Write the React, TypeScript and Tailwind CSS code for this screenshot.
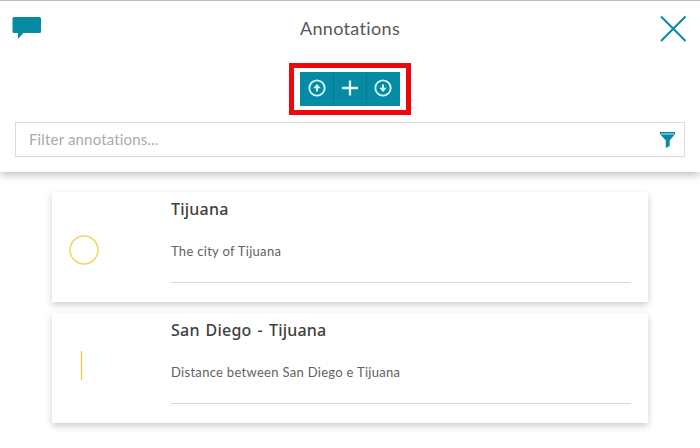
import React from "react";

const ink = "#078aa3";

function Arrow({ down = false }: { down?: boolean }) {
  return (
    <svg width="18" height="18" viewBox="0 0 18 18" fill="none" stroke="#d9fbff" className={down ? "mr-px mb-[2px] rotate-180" : "mb-[2px] ml-px"}>
      <circle cx="9" cy="9" r="7.700" strokeWidth="1.800" />
      <path d="M9 12.500V7" strokeWidth="2" />
      <path d="M5.300 9.300 9 5l3.700 4.300Z" fill="#d9fbff" stroke="none" />
    </svg>
  );
}

type CardProps = { title: string; text: string; children: React.ReactNode };

function Card({ title, text, children }: CardProps) {
  return (
    <article className="flex h-[110px] bg-white pr-[17px] shadow-[0_3px_7px_rgba(0,0,0,0.2)]">
      <div className="w-[119px] shrink-0 pl-[17px]">{children}</div>
      <div className="h-[91px] flex-1 border-b border-[#d8d8d8] whitespace-nowrap">
        <h2 className="pt-[7px] font-['Noto_Sans',sans-serif] text-[16px] leading-[20px] font-medium tracking-[0.22px] [word-spacing:1.6px] text-[#404040]">{title}</h2>
        <p className="mt-[24px] font-['Lato',sans-serif] text-[13px] leading-[16px] tracking-[0.3px] text-[#626262]">{text}</p>
      </div>
    </article>
  );
}

export default function App() {
  return (
    <main className="h-[448px] w-[700px] overflow-hidden bg-white font-['Lato',sans-serif]">
      <header className="h-[172px] border-t border-[#bdbdbd] bg-white shadow-[0_3px_8px_rgba(0,0,0,0.25)]">
        <div className="flex h-[62px] items-start justify-between pr-[13px] pl-[12px]">
          <svg className="mt-[15px]" width="30" height="24" viewBox="0 0 30 24" fill={ink}>
            <path d="M2 1h25.500q1.500 0 1.500 1.500V15.500q0 1.500-1.500 1.500H11.500L6 22.700V17H2Q.5 17 .5 15.500V2.500Q.5 1 2 1Z" />
          </svg>
          <h1 className="mt-[14px] -ml-px text-[18px] leading-[26px] tracking-[0.35px] text-[#575757]">Annotations</h1>
          <svg className="mt-[14px]" width="28" height="28" viewBox="0 0 28 28" fill="none" stroke={ink} strokeWidth="2">
            <path d="M2 1.500 26.500 26M26.500 1.500 2 26" />
          </svg>
        </div>
        <div className="mx-auto flex h-[52px] w-[122px] border-[5px] border-[#ee080b] pt-[4px] pl-[6px]">
          <div className="flex h-[34px] w-[100px] divide-x divide-[#067b91] bg-[#078aa3]">
            <button className="grid flex-1 place-items-center"><Arrow /></button>
            <button className="grid flex-1 place-items-center">
              <svg className="mb-[2px]" width="18" height="18" viewBox="0 0 18 18" stroke="#e5fdff" strokeWidth="2.300"><path d="M9 1.500v15M1 9h16" /></svg>
            </button>
            <button className="grid flex-1 place-items-center"><Arrow down /></button>
          </div>
        </div>
        <div className="mx-[15px] mt-[7px] flex h-[35px] items-center justify-between border border-[#dcdcdc] pr-[9px] pl-[13px]">
          <input className="w-[300px] text-[15px] tracking-[0.160px] outline-none placeholder:text-[#aaaaaa]" placeholder="Filter annotations..." />
          <svg width="15" height="18" viewBox="0 0 15 18" fill={ink}>
            <path d="M0 1h15v2L9.700 9.500V15L5.800 17V9.500L0 3Z" />
            <path d="M1 3h13" stroke="#bdeaf0" strokeWidth="1" />
          </svg>
        </div>
      </header>
      <section className="mx-[52px] mt-[20px] flex flex-col gap-[11px]">
        <Card title="Tijuana" text="The city of Tijuana">
          <svg className="mt-[43px]" width="30" height="30" viewBox="0 0 30 30" fill="none" stroke="#f3d364" strokeWidth="1.500"><circle cx="15" cy="15" r="14" /></svg>
        </Card>
        <Card title="San Diego - Tijuana" text="Distance between San Diego e Tijuana">
          <svg className="mt-[38px]" width="30" height="30" viewBox="0 0 30 30" stroke="#f2c838" strokeWidth="1.300"><path d="M12.500 0v29" /></svg>
        </Card>
      </section>
    </main>
  );
}
